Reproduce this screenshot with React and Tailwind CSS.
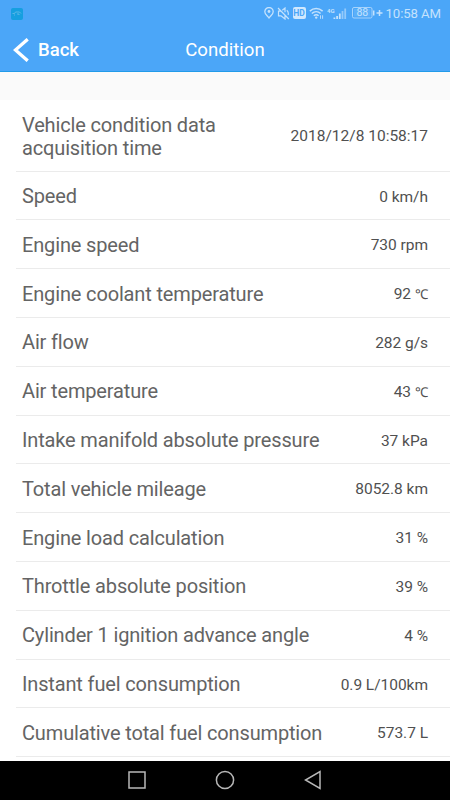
import React from 'react';

const readings = [
  { label: 'Speed', value: '0 km/h' },
  { label: 'Engine speed', value: '730 rpm' },
  { label: 'Engine coolant temperature', value: '92', unit: '℃' },
  { label: 'Air flow', value: '282 g/s' },
  { label: 'Air temperature', value: '43', unit: '℃' },
  { label: 'Intake manifold absolute pressure', value: '37 kPa' },
  { label: 'Total vehicle mileage', value: '8052.8 km' },
  { label: 'Engine load calculation', value: '31 %' },
  { label: 'Throttle absolute position', value: '39 %' },
  { label: 'Cylinder 1 ignition advance angle', value: '4 %' },
  { label: 'Instant fuel consumption', value: '0.9 L/100km' },
  { label: 'Cumulative total fuel consumption', value: '573.7 L' },
];

const StatusBar = () => (
  <div className="flex h-[27px] items-center pl-[11px] pr-[9px] text-[#c4e2fd]">
    {/* App notification */}
    <svg width="12" height="12" viewBox="0 0 12 12" fill="none">
      <rect width="12" height="12" rx="2" fill="#169fe0" />
      <path d="M1.5 5.5h2l1-1.5h4l1.5 1.5M3 7h1M6 6h2v1" stroke="#69bde8" strokeWidth=".8" />
    </svg>

    <div className="ml-auto flex items-center">
      {/* Location */}
      <svg className="mr-[3px]" width="10" height="12" viewBox="0 0 10 12" fill="none" stroke="currentColor">
        <path d="M5 11C3.6 8.9.8 7.2.8 4.7a4.2 4.2 0 0 1 8.4 0C9.2 7.2 6.4 8.9 5 11Z" strokeWidth="1.3" />
        <circle cx="5" cy="4.5" r="1.4" fill="currentColor" stroke="none" />
      </svg>
      {/* Muted */}
      <svg className="mr-[3px]" width="13" height="13" viewBox="0 0 13 13" fill="none" stroke="currentColor" strokeWidth="1.2">
        <path d="M4 4.2H1.5v4.6H4L8 12V8.5M5.3 3.2 8 1v4.3M1 1l10.8 11M9.8 3.2c1.4 1.2 1.8 3 1.3 4.8" />
      </svg>
      <span className="mr-[3px] flex h-[12px] w-[13px] items-center justify-center rounded-[2px] bg-[#d0e8fe] font-['Roboto',sans-serif] text-[8.5px] font-bold leading-none text-[#4ba6f8]">
        HD
      </span>
      {/* Wifi */}
      <svg className="mr-[3px]" width="15" height="12" viewBox="0 0 15 12" fill="none" stroke="currentColor" strokeWidth="1.5">
        <path d="M.8 4.1c3.8-3.5 9-3.5 12.8 0M2.8 6.5c2.6-2.4 6.2-2.4 8.8 0M4.8 8.8c1.5-1.3 3.4-1.3 4.8 0" />
        <circle cx="7.2" cy="10.6" r="1.2" fill="currentColor" stroke="none" />
        <path d="M11.5 8.3v3.5M13.6 8.3v3.5" strokeWidth=".9" />
      </svg>
      {/* Mobile signal */}
      <svg className="mr-[5px]" width="20" height="13" viewBox="0 0 20 13" fill="currentColor">
        <text x="0" y="5.5" fontSize="6" fontWeight="700" fontFamily="Roboto, sans-serif">4G</text>
        <rect x="6.5" y="10.5" width="1.8" height="1.5" />
        <rect x="9.2" y="9" width="1.8" height="3" />
        <rect x="11.9" y="6.5" width="1.8" height="5.5" />
        <rect x="14.6" y="4" width="1.8" height="8" opacity=".6" />
        <rect x="17.3" y="1.5" width="1.8" height="10.5" opacity=".6" />
      </svg>
      {/* Battery */}
      <svg className="mr-[3px]" width="31" height="12" viewBox="0 0 31 12" fill="none">
        <rect x=".5" y=".5" width="19.5" height="10.5" rx="1.5" stroke="currentColor" strokeOpacity=".75" />
        <rect x="2" y="2" width="16.5" height="7.5" fill="currentColor" fillOpacity=".15" />
        <path d="M21.7 3.5v5M24.5 6h6M27.5 3v6" stroke="currentColor" strokeWidth="1.5" />
        <text x="10.3" y="9.4" textAnchor="middle" fontSize="10.5" fill="currentColor" fontFamily="Roboto, sans-serif">88</text>
      </svg>
      <span className="text-[13.2px] leading-none tracking-[-0.1px]">10:58 AM</span>
    </div>
  </div>
);

const Header = () => (
  <header className="h-[72px] shrink-0 border-b border-[#229be9] bg-[#4ba6f8]">
    <StatusBar />
    <div className="grid h-[45px] grid-cols-3 items-center pl-[13px] pr-[13px] text-white">
      <button className="flex items-center gap-[9px] text-[18.5px] font-medium">
        <svg width="16" height="24" viewBox="0 0 16 24" fill="none" stroke="currentColor" strokeWidth="3.3">
          <path d="M14.7 1.2 2.4 12l12.3 10.8" />
        </svg>
        <span className="pt-[2px]">Back</span>
      </button>
      <h1 className="pt-[2px] text-center text-[18.6px]">Condition</h1>
    </div>
  </header>
);

const Row = ({ label, value, unit }) => (
  <div className="ml-4 flex h-[48.8px] shrink-0 items-center justify-between border-b border-[#ebebeb] pl-[6px] pr-[22px] pt-[2px]">
    <span className="text-[20px] leading-[23px] tracking-[-0.15px]">{label}</span>
    <span className="text-[15.5px] leading-[22px] tracking-[-0.03px] text-[#505050]">
      {value}
      {unit && <span className="ml-[4px] text-[13.5px]">{unit}</span>}
    </span>
  </div>
);

const NavigationBar = () => (
  <nav className="flex h-[39px] shrink-0 items-center justify-center gap-[69px] bg-black pb-[1px]">
    <svg width="18" height="18" viewBox="0 0 18 18" fill="none" stroke="#b8b8b8" strokeWidth="1.5">
      <rect x="1" y="1" width="16" height="16" />
    </svg>
    <svg width="20" height="20" viewBox="0 0 20 20" fill="none" stroke="#b8b8b8" strokeWidth="1.5">
      <circle cx="10" cy="10" r="8.6" />
    </svg>
    <svg width="18" height="20" viewBox="0 0 18 20" fill="none" stroke="#b8b8b8" strokeWidth="1.5">
      <path d="M16 1.5v17L1.5 10Z" />
    </svg>
  </nav>
);

const App = () => {
  return (
    <div className="flex h-[800px] w-[450px] flex-col overflow-hidden bg-white font-['Roboto',sans-serif] text-[#646464]">
      <Header />
      <div className="h-[28px] shrink-0 bg-[#fafafa]" />
      <main className="flex min-h-0 flex-1 flex-col overflow-hidden">
        <div className="ml-4 flex h-[71.7px] shrink-0 items-center justify-between border-b border-[#ebebeb] pl-[6px] pr-[22px] pt-[3px]">
          <span className="w-[230px] text-[20px] leading-[23px] tracking-[-0.15px]">
            Vehicle condition data acquisition time
          </span>
          <span className="text-[15.5px] text-[#505050]">2018/12/8 10:58:17</span>
        </div>
        {readings.map((item) => (
          <Row key={item.label} label={item.label} value={item.value} unit={item.unit} />
        ))}
      </main>
      <NavigationBar />
    </div>
  );
};

export default App;
